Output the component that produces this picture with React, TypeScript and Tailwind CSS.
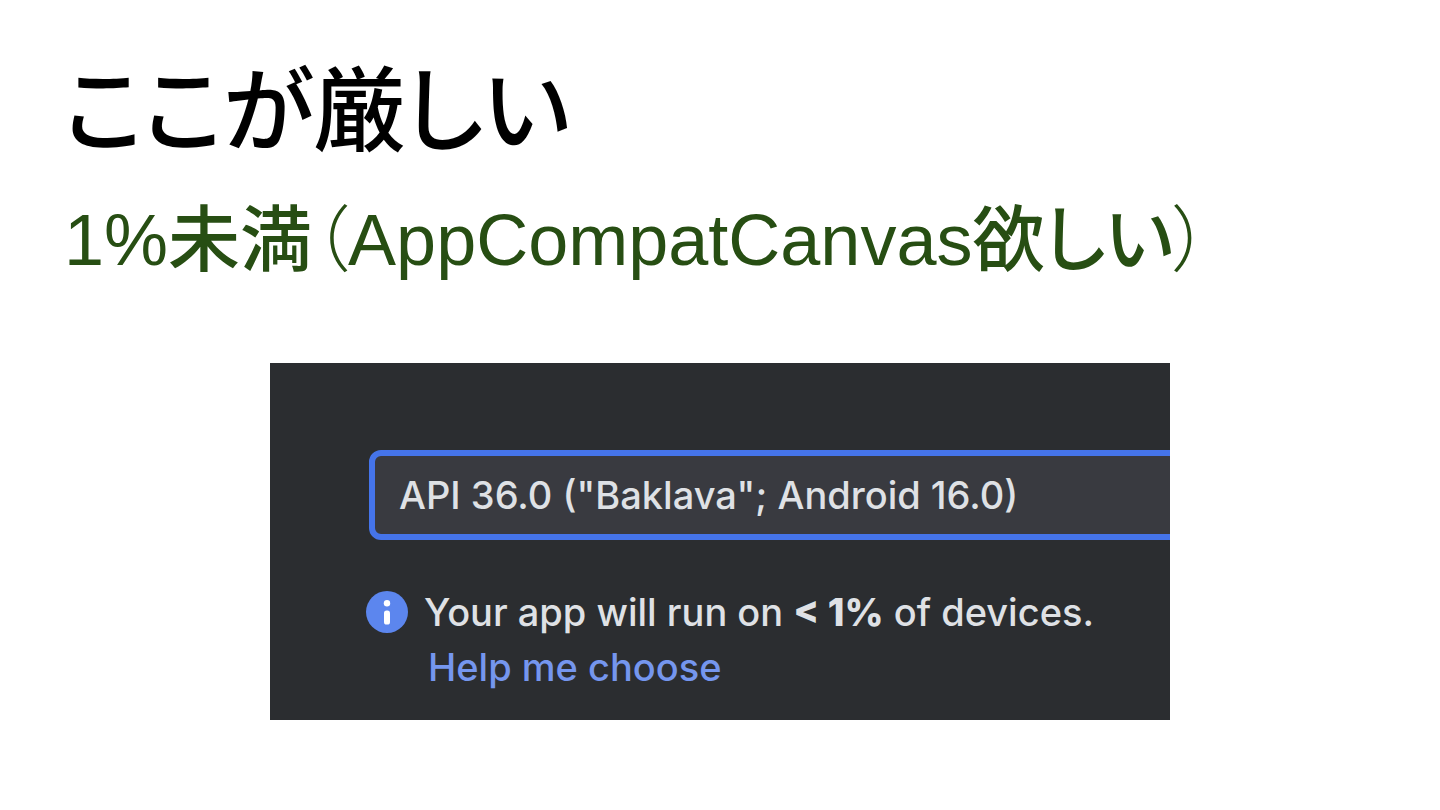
function InfoIcon() {
  return (
    <svg viewBox="0 0 42 42" className="h-[42px] w-[42px] shrink-0" aria-hidden="true">
      <circle cx="21" cy="21" r="21" fill="#5c86ee" />
      <circle cx="21" cy="12.2" r="3.2" fill="#fff" />
      <rect x="18" y="19.6" width="6" height="14" rx="2.6" fill="#fff" />
    </svg>
  );
}

function ApiPicker() {
  return (
    <section className="mx-auto w-5/8 overflow-hidden bg-[#2b2d30] pt-[87px] pb-6 font-['Inter',sans-serif] text-[38px] font-medium text-[#dfe1e5]">
      <div className="-mr-4 ml-[99px]">
        <select
          aria-label="Minimum SDK"
          className="block h-[90px] w-full appearance-none rounded-xl border-6 border-[#4574ea] bg-[#393a40] px-6 leading-[48px] outline-none"
        >
          <option>API 36.0 (&quot;Baklava&quot;; Android 16.0)</option>
        </select>
      </div>
      <div className="mt-[45px] ml-24 flex items-center gap-4">
        <InfoIcon />
        <p className="leading-[54px] whitespace-nowrap">
          Your app will run on <b className="font-extrabold">&lt; 1%</b> of devices.
        </p>
      </div>
      <a href="#" className="ml-[158px] leading-[54px] text-[#7596ee]">
        Help me choose
      </a>
    </section>
  );
}

export default function App() {
  return (
    <main className="min-h-screen bg-white font-['Liberation_Sans','Noto_Sans_CJK_JP',sans-serif] font-medium [font-feature-settings:'palt']">
      <header className="px-16 pt-14 pb-[75px]">
        <h1 className="text-[92px] leading-[112px] font-medium text-black">ここが厳しい</h1>
        <p className="mt-6 text-[72px] leading-[96px] text-[#274e13]">
          1%未満<span className="font-light">（</span>AppCompatCanvas欲しい
          <span className="font-light">）</span>
        </p>
      </header>
      <ApiPicker />
    </main>
  );
}
